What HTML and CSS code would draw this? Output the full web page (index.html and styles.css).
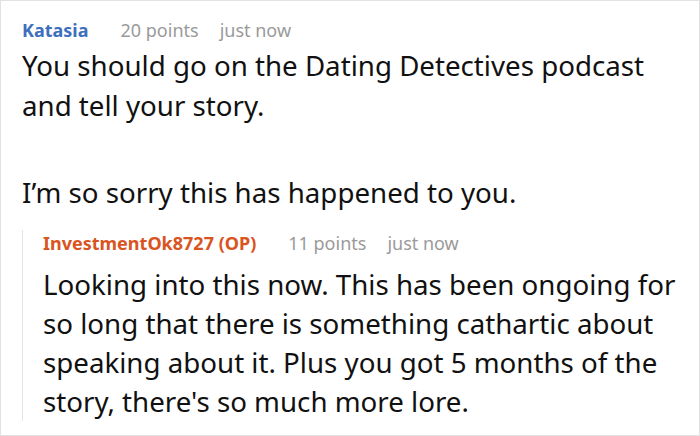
FILE: index.html
```html
<!DOCTYPE html>
<html>
<head>
<meta charset="utf-8">
<link rel="stylesheet" href="styles.css">
</head>
<body>
<div class="frame">
  <div class="comment">
    <div class="meta">
      <span class="author author-blue">Katasia</span>
      <span class="points">20 points</span>
      <span class="time">just now</span>
    </div>
    <div class="text">
      <p>You should go on the Dating Detectives podcast and tell your story.</p>
      <p>I’m so sorry this has happened to you.</p>
    </div>
    <div class="reply">
      <div class="meta">
        <span class="author author-orange">InvestmentOk8727 (OP)</span>
        <span class="points">11 points</span>
        <span class="time">just now</span>
      </div>
      <div class="text reply-text">
        <p>Looking into this now. This has been ongoing for so long that there is something cathartic about speaking about it. Plus you got 5 months of the story, there's so much more lore.</p>
      </div>
    </div>
  </div>
</div>
</body>
</html>
```

FILE: styles.css
```css
html, body {
  margin: 0;
  padding: 0;
  background: #ffffff;
}
.frame {
  width: 700px;
  height: 436px;
  box-sizing: border-box;
  border: 1px solid #e2e2e2;
  padding: 16px 18px 0 21px;
  font-family: "Noto Sans", "Open Sans", sans-serif;
  color: #111111;
  overflow: hidden;
}
.meta {
  display: flex;
  align-items: baseline;
  font-size: 18px;
  line-height: 26px;
  color: #9a9a9a;
}
.author {
  font-weight: 700;
}
.author-blue { color: #3d6fbe; }
.author-orange { color: #d9541e; }
.points { margin-left: 32px; }
.time { margin-left: 21px; }
.text {
  margin-top: 2px;
  font-size: 27.7px;
  line-height: 40px;
}
.text p {
  margin: 0 0 47px 0;
}
.text p:last-child { margin-bottom: 0; }
.reply {
  margin-top: 18px;
  border-left: 1px solid #e4e4e4;
  padding-left: 20px;
  padding-bottom: 0;
}
.reply-text {
  margin-top: 9px;
  line-height: 39px;
}
```
